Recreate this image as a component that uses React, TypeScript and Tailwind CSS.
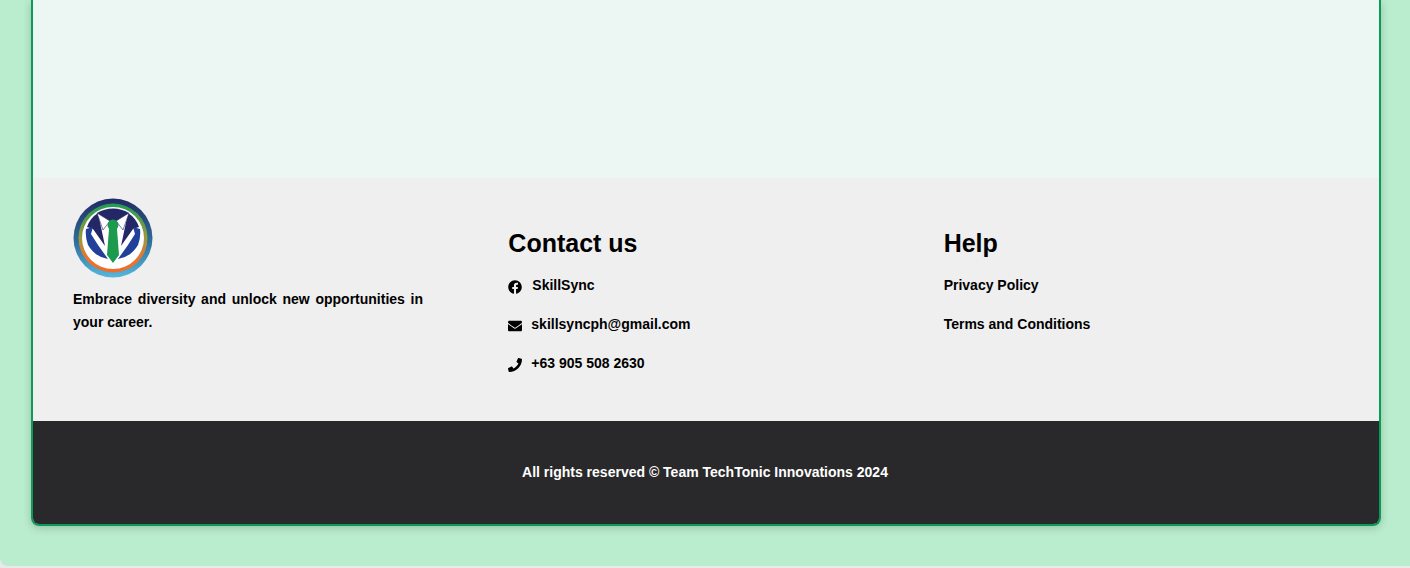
import { FaEnvelope, FaFacebook, FaPhone } from "react-icons/fa";

function Logo() {
  return (
    <svg width="80" height="80" viewBox="0 0 80 80" className="block">
      <defs>
        <linearGradient id="ring" x1="0" y1="0" x2="0" y2="1">
          <stop offset="0" stopColor="#232a63" />
          <stop offset="0.55" stopColor="#2d6f9b" />
          <stop offset="1" stopColor="#56b7dc" />
        </linearGradient>
        <linearGradient id="inner" x1="0" y1="0" x2="0" y2="1">
          <stop offset="0" stopColor="#1f9d55" />
          <stop offset="0.5" stopColor="#9a9a3c" />
          <stop offset="0.75" stopColor="#e8772e" />
          <stop offset="1" stopColor="#ee6c2b" />
        </linearGradient>
      </defs>
      <circle cx="40" cy="40" r="39.5" fill="url(#ring)" />
      <circle cx="40" cy="40" r="34.5" fill="url(#inner)" />
      <circle cx="40" cy="40" r="31" fill="#ffffff" />
      <path d="M24 15 A30 30 0 0 1 56 15 L48 24 L32 24 Z" fill="#242766" />
      <path d="M25 15 L32 48 L20 31 L14 29 Q17 20 25 15 Z" fill="#242766" />
      <path d="M55 15 L48 48 L60 31 L66 29 Q63 20 55 15 Z" fill="#242766" />
      <path d="M13 31 L20 29 L18 36 L25 47 L35 61 Q22 59 15 47 Q12 39 13 31 Z" fill="#21409a" />
      <path d="M67 31 L60 29 L62 36 L55 47 L45 61 Q58 59 65 47 Q68 39 67 31 Z" fill="#21409a" />
      <path d="M24 15 L37 23 L30 32 Z" fill="#ffffff" stroke="#242766" strokeWidth="0.6" />
      <path d="M56 15 L43 23 L50 32 Z" fill="#ffffff" stroke="#242766" strokeWidth="0.6" />
      <circle cx="40" cy="27" r="5.5" fill="#1c9a4e" />
      <path d="M36 31 L44 31 L46 57 L40 65 L34 57 Z" fill="#1c9a4e" />
    </svg>
  );
}

export default function App() {
  return (
    <div className="h-[568px] overflow-hidden bg-[#e9e9e9] font-['Liberation_Sans',Arial,sans-serif]">
      <div className="h-[566px] rounded-bl-lg bg-[#baedcd] pr-[29px] pl-[31px]">
        <div className="flex h-[526px] flex-col overflow-hidden rounded-b-lg border-x-2 border-b-2 border-[#0c9a5b] shadow-[0_2px_8px_rgba(0,0,0,0.2)]">
          <div className="h-[178px] bg-[#ecf7f3]" />
          <div className="grid h-[243px] grid-cols-3 gap-10 bg-[#efefef] px-10 pt-5 text-sm font-bold text-black">
            <div>
              <Logo />
              <p className="mt-2.5 w-[350px] text-justify leading-[23px]">
                Embrace diversity and unlock new opportunities in your career.
              </p>
            </div>
            <div className="pt-[31px]">
              <h2 className="text-[25px] leading-7 font-bold">Contact us</h2>
              <div className="mt-5 flex h-4 items-center gap-2.5">
                <FaFacebook className="mt-1 h-3.5 w-3.5" />
                <span>SkillSync</span>
              </div>
              <div className="mt-[23px] flex h-4 items-center gap-[9px]">
                <FaEnvelope className="mt-1 h-3.5 w-3.5" />
                <span>skillsyncph@gmail.com</span>
              </div>
              <div className="mt-[23px] flex h-4 items-center gap-[9px]">
                <FaPhone className="mt-1 h-3.5 w-3.5" />
                <span>+63 905 508 2630</span>
              </div>
            </div>
            <div className="pt-[31px]">
              <h2 className="text-[25px] leading-7 font-bold">Help</h2>
              <div className="mt-5 h-4 leading-4">Privacy Policy</div>
              <div className="mt-[23px] h-4 leading-4">Terms and Conditions</div>
            </div>
          </div>
          <div className="flex flex-1 items-center justify-center bg-[#29292b] pr-[2px] pb-[1px] text-sm font-bold text-white">
            All rights reserved © Team TechTonic Innovations 2024
          </div>
        </div>
      </div>
    </div>
  );
}
